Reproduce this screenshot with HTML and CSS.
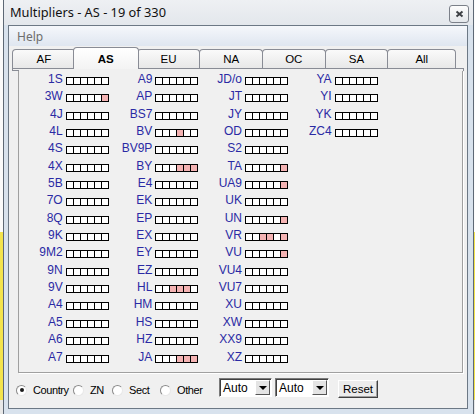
FILE: index.html
```html
<!DOCTYPE html>
<html lang="en">

<head>
    <meta charset="UTF-8">
    <title>Multipliers - AS - 19 of 330</title>
    <link rel="stylesheet" href="styles.css">
</head>

<body>
    <div class="window">
        <div class="titlebar">
            <span class="title">Multipliers - AS - 19 of 330</span>
            <span class="close">
                <svg width="9" height="8" viewBox="0 0 9 8">
                    <path d="M1.5 1.5 L7.5 6.5 M7.5 1.5 L1.5 6.5" stroke="#3c3f44" stroke-width="2" fill="none" />
                </svg>
            </span>
        </div>
        <div class="client">
            <div class="menubar">Help</div>
            <ul class="tabs">
                <li class="tab first">AF</li>
                <li class="tab active">AS</li>
                <li class="tab">EU</li>
                <li class="tab">NA</li>
                <li class="tab">OC</li>
                <li class="tab">SA</li>
                <li class="tab last">All</li>
            </ul>
            <div class="tabline"></div>
            <div class="panel">
                <div class="grid" id="grid"></div>
            </div>
            <div class="controls">
                <label class="opt w-country"><span class="radio checked"></span>Country</label>
                <label class="opt w-zn"><span class="radio"></span>ZN</label>
                <label class="opt w-sect"><span class="radio"></span>Sect</label>
                <label class="opt w-other"><span class="radio"></span>Other</label>
                <div class="combo">Auto<span class="arrow"></span></div>
                <div class="combo second">Auto<span class="arrow"></span></div>
                <div class="btn">Reset</div>
            </div>
        </div>
    </div>
    <script>
        // call, boxes already worked (1..6)
        const mults = [
            ['1S'], ['3W', [6]], ['4J'], ['4L'], ['4S'], ['4X'], ['5B'], ['7O'], ['8Q'],
            ['9K'], ['9M2'], ['9N'], ['9V'], ['A4'], ['A5'], ['A6'], ['A7'],
            ['A9'], ['AP'], ['BS7'], ['BV', [4]], ['BV9P'], ['BY', [4, 5, 6]], ['E4'], ['EK'], ['EP'],
            ['EX'], ['EY'], ['EZ'], ['HL', [3, 4, 5]], ['HM'], ['HS'], ['HZ'], ['JA', [4, 5, 6]],
            ['JD/o'], ['JT'], ['JY'], ['OD'], ['S2'], ['TA', [6]], ['UA9', [6]], ['UK'], ['UN', [6]],
            ['VR', [3, 4, 6]], ['VU', [6]], ['VU4'], ['VU7'], ['XU'], ['XW'], ['XX9'], ['XZ'],
            ['YA'], ['YI'], ['YK'], ['ZC4']
        ];
        let grid = document.getElementById('grid');
        mults.forEach(function (m) {
            let on = m[1] || [];
            let boxes = '';
            for (let i = 1; i <= 6; i++) {
                boxes += on.includes(i) ? '<i class="on"></i>' : '<i></i>';
            }
            grid.insertAdjacentHTML('beforeend',
                '<div class="mult"><span class="call">' + m[0] + '</span><span class="boxes">' + boxes + '</span></div>');
        });
    </script>
</body>

</html>
```

FILE: styles.css
```css
* {
    margin: 0;
    padding: 0;
    box-sizing: border-box;
}

body {
    width: 475px;
    height: 414px;
    overflow: hidden;
    background: linear-gradient(#fbfbfb 0 232px, #f3e34c 232px 400px, #e8e8e8 400px);
    font-family: "Liberation Sans", Arial, sans-serif;
    font-size: 12px;
    color: #000;
}

.window {
    margin-left: 3px;
    width: 471px;
    height: 414px;
    border-left: 1px solid #5d6875;
    border-right: 1px solid #5d6875;
    background: #d8e2ed;
}

.titlebar {
    height: 25px;
    display: flex;
    justify-content: space-between;
    align-items: flex-start;
    padding: 0 4px 0 6px;
    background: linear-gradient(#eef0f3, #e3e7ec);
}

.title {
    font-family: "Noto Sans", sans-serif;
    font-size: 12.8px;
    line-height: 25px;
    color: #111;
}

.close {
    margin-top: 5px;
    width: 20px;
    height: 18px;
    display: flex;
    align-items: center;
    justify-content: center;
    border: 1px solid #7b8089;
    border-radius: 3px;
    background: linear-gradient(#fdfdfd, #e4e7eb);
}

.client {
    margin-left: 4px;
    width: 460px;
    height: 384px;
    border: 1px solid #6c7885;
    background: #f0f0f0;
}

.menubar {
    height: 20px;
    display: flex;
    align-items: center;
    padding-left: 8px;
    font-family: "Noto Sans", sans-serif;
    font-size: 12px;
    color: #6d6d6d;
    background: linear-gradient(#f5f7fb, #dfe6f0);
}

.tabs {
    display: flex;
    align-items: flex-end;
    height: 22px;
    padding-left: 3px;
    list-style: none;
}

.tab {
    width: 63.67px;
    height: 19px;
    margin-right: -1px;
    border: 1px solid #898c95;
    border-bottom: none;
    border-radius: 4px 4px 0 0;
    background: linear-gradient(#fafafa, #e8e8e8);
    font-size: 11.5px;
    line-height: 18px;
    text-align: center;
}

.tab.last {
    width: 69px;
}

.tab.active {
    position: relative;
    z-index: 1;
    height: 22px;
    margin: 0 -2px -1px -2px;
    width: 66px;
    background: linear-gradient(#ffffff, #f3f3f3);
    font-weight: bold;
    line-height: 22px;
}

.tabline {
    margin-left: 3px;
    width: 452px;
    height: 3px;
    border: 1px solid #898c95;
    border-bottom: none;
    background: linear-gradient(#898c95, #898c95) no-repeat left bottom / 6px 1px;
}

.panel {
    margin-left: 9px;
    width: 445px;
    height: 302px;
    border: 1px solid #a0a0a0;
    border-top: none;
    box-shadow: 1px 1px 0 #fff;
}

.grid {
    display: grid;
    grid-template-columns: repeat(4, 89.67px);
    grid-template-rows: repeat(17, 17.35px);
    grid-auto-flow: column;
}

.mult {
    display: flex;
    align-items: flex-start;
}

.call {
    flex: 0 0 43.67px;
    margin-right: 3px;
    text-align: right;
    line-height: 17.35px;
    color: #2a2aa4;
    white-space: nowrap;
}

.boxes {
    display: flex;
    margin-top: 6px;
    border-left: 1px solid #000;
}

.boxes i {
    width: 7px;
    height: 8px;
    border: 1px solid #000;
    border-left: none;
    background: #fff;
}

.boxes i.on {
    background: #f4b3b3;
}

.controls {
    display: flex;
    align-items: flex-start;
    padding: 5px 0 0 7px;
    font-size: 11px;
}

.opt {
    display: flex;
    align-items: center;
    height: 12px;
    margin-top: 6px;
    white-space: nowrap;
    letter-spacing: -0.4px;
}

.w-country {
    width: 57px;
}

.w-zn {
    width: 39px;
}

.w-sect {
    width: 48px;
}

.w-other {
    width: 59px;
}

.radio {
    flex: none;
    width: 11px;
    height: 11px;
    margin-right: 6px;
    border-radius: 50%;
    border: 1px solid;
    border-color: #8a8a8a #e8e8e8 #e8e8e8 #8a8a8a;
    background: #fff;
    display: flex;
    align-items: center;
    justify-content: center;
}

.radio.checked::after {
    content: "";
    width: 4px;
    height: 4px;
    border-radius: 50%;
    background: #1a1a1a;
}

.combo {
    width: 53px;
    height: 19px;
    display: flex;
    align-items: center;
    justify-content: space-between;
    padding: 0 1px 0 3px;
    border: 1px solid;
    border-color: #7a7a7a #fff #fff #7a7a7a;
    box-shadow: inset 1px 1px 0 #404040;
    background: #fff;
    font-size: 12px;
}

.combo.second {
    width: 54px;
    margin-left: 3px;
}

.arrow {
    width: 15px;
    height: 15px;
    display: flex;
    align-items: center;
    justify-content: center;
    border: 1px solid;
    border-color: #fff #555 #555 #fff;
    background: #e4e4e4;
}

.arrow::after {
    content: "";
    border-left: 4px solid transparent;
    border-right: 4px solid transparent;
    border-top: 4px solid #000;
}

.btn {
    width: 40px;
    height: 18px;
    margin: 2px 0 0 9px;
    border: 1px solid;
    border-color: #fff #404040 #404040 #fff;
    box-shadow: inset -1px -1px 0 #a0a0a0;
    background: #ececec;
    font-size: 11.5px;
    line-height: 16px;
    text-align: center;
}
```
